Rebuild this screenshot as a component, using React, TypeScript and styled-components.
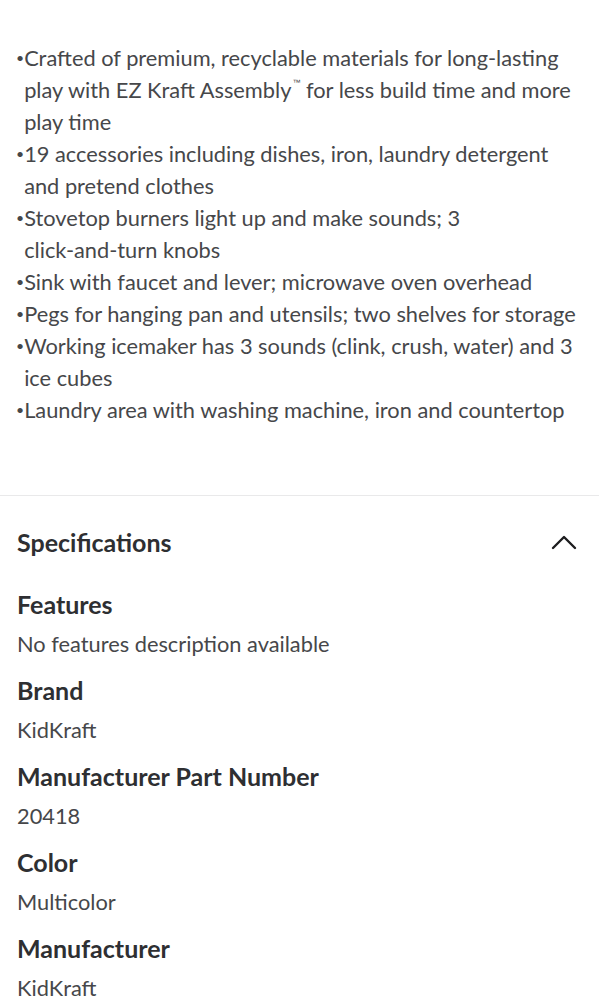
import React from 'react';
import styled, { createGlobalStyle } from 'styled-components';

const GlobalStyle = createGlobalStyle`
	body {
		margin: 0;
		background: #fff;
		font-family: Lato, "Noto Sans", sans-serif;
		-webkit-font-smoothing: antialiased;
	}
`;

const Page = styled.div`
	width: 599px;
	background: #fff;
`;

const BulletList = styled.ul`
	list-style: none;
	margin: 0;
	padding: 42px 18px 0 16px;
	height: 496px;
	box-sizing: border-box;
	border-bottom: 1px solid #e9e9ea;
`;

const BulletItem = styled.li`
	display: flex;
	font-size: 21.8px;
	line-height: 32px;
	color: #46474a;
`;

const Dot = styled.span`
	flex: 0 0 6px;
	font-size: 14px;
`;

const NoWrap = styled.span`
	white-space: nowrap;
`;

const Tm = styled.span`
	display: inline-block;
	font-family: "Liberation Sans", sans-serif;
	font-size: 8px;
	line-height: 8px;
	vertical-align: top;
	margin-top: 5px;
	margin-left: 1px;
`;

const Header = styled.div`
	display: flex;
	align-items: center;
	justify-content: space-between;
	padding: 28px 22px 0 17px;
	height: 36px;
`;

const HeaderTitle = styled.h2`
	margin: 0;
	font-size: 25px;
	font-weight: 700;
	color: #2e2f32;
`;

const SpecList = styled.dl`
	margin: 0;
	padding: 28px 17px 0 17px;
`;

const SpecLabel = styled.dt`
	font-size: 25px;
	font-weight: 700;
	line-height: 32px;
	color: #2e2f32;
`;

const SpecValue = styled.dd`
	margin: 8px 0 14px 0;
	font-size: 21.8px;
	line-height: 32px;
	color: #46474a;
`;

const bullets: React.ReactNode[] = [
	<>Crafted of premium, recyclable materials for long-lasting play with EZ Kraft Assembly<Tm>™</Tm> for less build time and more play time</>,
	'19 accessories including dishes, iron, laundry detergent and pretend clothes',
	<>Stovetop burners light up and make sounds; 3 <NoWrap>click-and-turn</NoWrap> knobs</>,
	'Sink with faucet and lever; microwave oven overhead',
	'Pegs for hanging pan and utensils; two shelves for storage',
	'Working icemaker has 3 sounds (clink, crush, water) and 3 ice cubes',
	'Laundry area with washing machine, iron and countertop',
];

const specs = [
	{ label: 'Features', value: 'No features description available' },
	{ label: 'Brand', value: 'KidKraft' },
	{ label: 'Manufacturer Part Number', value: '20418' },
	{ label: 'Color', value: 'Multicolor' },
	{ label: 'Manufacturer', value: 'KidKraft' },
];

const ChevronUp = () => (
	<svg width="26" height="16" viewBox="0 0 26 16" fill="none">
		<path d="M2 14 L13 3 L24 14" stroke="#1d1d1f" strokeWidth="2.4" strokeLinecap="round" strokeLinejoin="round" />
	</svg>
);

export default function App() {
	return (
		<Page>
			<GlobalStyle />
			<BulletList>
				{bullets.map((b, i) => (
					<BulletItem key={i}>
						<Dot>•</Dot>
						<span>{b}</span>
					</BulletItem>
				))}
			</BulletList>
			<Header>
				<HeaderTitle>Specifications</HeaderTitle>
				<ChevronUp />
			</Header>
			<SpecList>
				{specs.map((s) => (
					<React.Fragment key={s.label}>
						<SpecLabel>{s.label}</SpecLabel>
						<SpecValue>{s.value}</SpecValue>
					</React.Fragment>
				))}
			</SpecList>
		</Page>
	);
}
